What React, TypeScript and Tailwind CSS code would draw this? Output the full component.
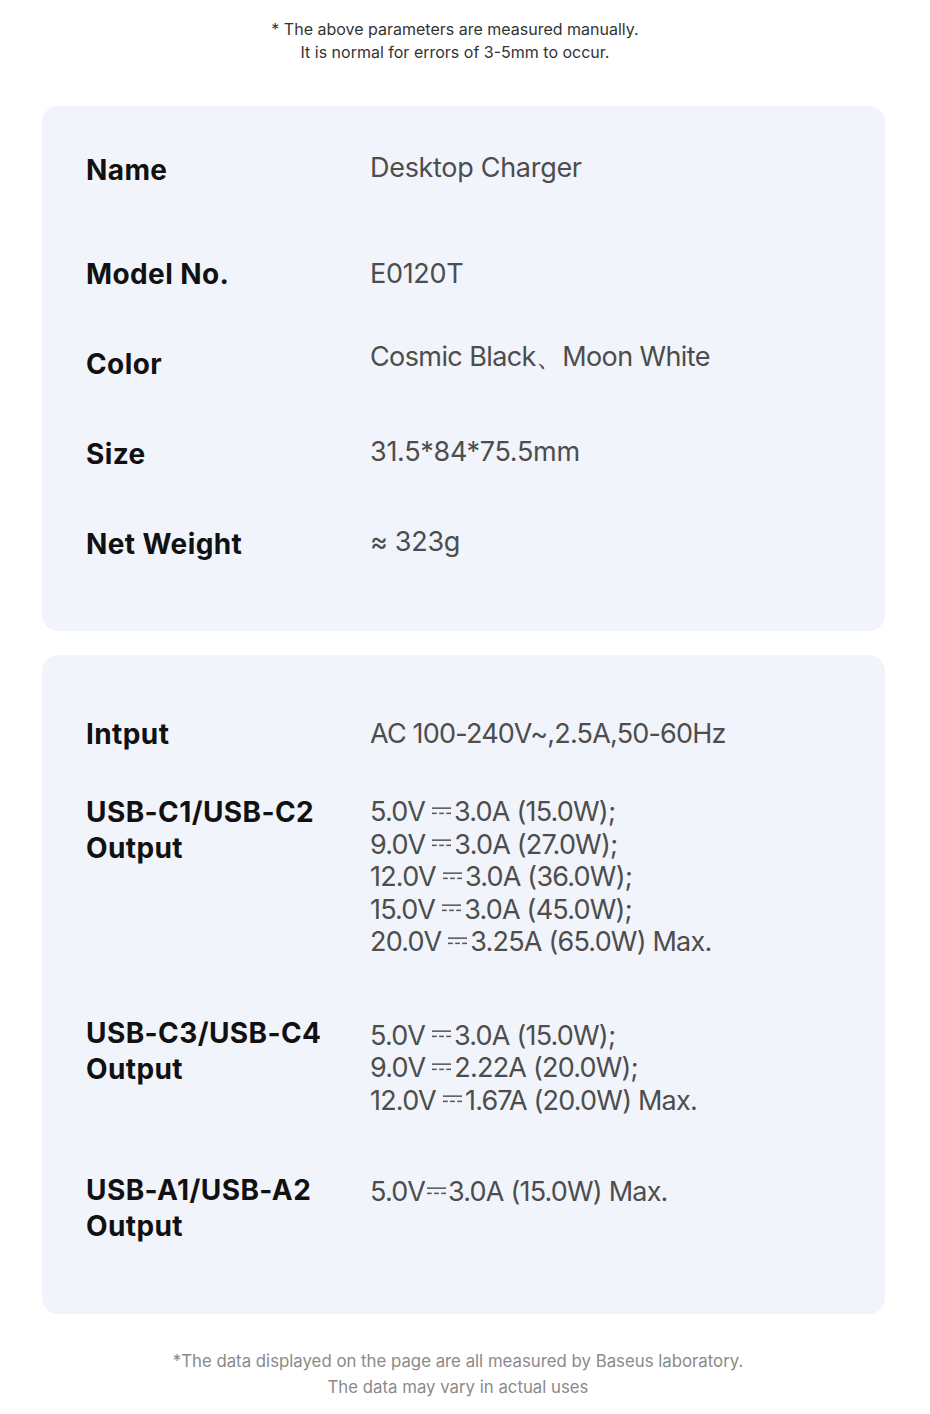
import React from 'react';

const Dc: React.FC<{ tight?: boolean }> = ({ tight }) => (
  <svg
    viewBox="0 0 20 12"
    className={`inline-block w-[19px] h-[12px] align-middle -mt-[6px] ${tight ? 'mx-[2px]' : 'ml-[7px] mr-[3px]'}`}
  >
    <line x1="0" y1="3" x2="20" y2="3" stroke="#555" strokeWidth="1.6" />
    <line x1="0" y1="8.5" x2="5" y2="8.5" stroke="#555" strokeWidth="1.6" />
    <line x1="7.5" y1="8.5" x2="12.5" y2="8.5" stroke="#555" strokeWidth="1.6" />
    <line x1="15" y1="8.5" x2="20" y2="8.5" stroke="#555" strokeWidth="1.6" />
  </svg>
);

const Label: React.FC<{ children: React.ReactNode }> = ({ children }) => (
  <div className="w-[284px] shrink-0 text-[28px] leading-[36px] font-bold text-[#111] tracking-[0.4px]">{children}</div>
);

const App: React.FC = () => {
  return (
    <div className="w-[930px] min-h-[1414px] bg-white font-['Inter','Liberation_Sans',sans-serif]">
      <div className="pt-[18px] pr-[20px] text-center text-[16px] leading-[23px] text-[#333]">
        <p>* The above parameters are measured manually.</p>
        <p>It is normal for errors of 3-5mm to occur.</p>
      </div>

      <div className="ml-[42px] mr-[45px] mt-[42px] h-[525px] rounded-[16px] bg-[#f1f4fb] pl-[44px] pt-[19px] text-[27px] text-[#4d4d4d] tracking-[-0.3px]">
        <div className="flex h-[90px] items-center">
          <Label>Name</Label>
          <div className="mb-[4px]">Desktop Charger</div>
        </div>
        <div className="mt-[14px] flex h-[90px] items-center">
          <Label>Model No.</Label>
          <div>E0120T</div>
        </div>
        <div className="flex h-[90px] items-center">
          <Label>Color</Label>
          <div className="mb-[14px] tracking-[-0.6px]">Cosmic Black、Moon White</div>
        </div>
        <div className="flex h-[90px] items-center">
          <Label>Size</Label>
          <div className="mb-[4px]">31.5*84*75.5mm</div>
        </div>
        <div className="flex h-[90px] items-center">
          <Label>Net Weight</Label>
          <div className="mb-[4px]">≈ 323g</div>
        </div>
      </div>

      <div className="ml-[42px] mr-[45px] mt-[24px] h-[659px] rounded-[16px] bg-[#f1f4fb] pl-[44px] pt-[61px] text-[27px] text-[#4d4d4d] tracking-[-0.8px]">
        <div className="flex items-start">
          <Label>Intput</Label>
          <div className="leading-[36px]">AC 100-240V~,2.5A,50-60Hz</div>
        </div>

        <div className="mt-[42px] flex items-start">
          <Label>
            USB-C1/USB-C2
            <br />
            Output
          </Label>
          <div className="mt-[2px] leading-[32.5px]">
            <div>5.0V<Dc />3.0A (15.0W);</div>
            <div>9.0V<Dc />3.0A (27.0W);</div>
            <div>12.0V<Dc />3.0A (36.0W);</div>
            <div>15.0V<Dc />3.0A (45.0W);</div>
            <div>20.0V<Dc />3.25A (65.0W) Max.</div>
          </div>
        </div>

        <div className="mt-[56px] flex items-start">
          <Label>
            USB-C3/USB-C4
            <br />
            Output
          </Label>
          <div className="mt-[5px] leading-[32.5px]">
            <div>5.0V<Dc />3.0A (15.0W);</div>
            <div>9.0V<Dc />2.22A (20.0W);</div>
            <div>12.0V<Dc />1.67A (20.0W) Max.</div>
          </div>
        </div>

        <div className="mt-[55px] flex items-start">
          <Label>
            USB-A1/USB-A2
            <br />
            Output
          </Label>
          <div className="mt-[4px] leading-[32.5px]">
            <div>5.0V<Dc tight />3.0A (15.0W) Max.</div>
          </div>
        </div>
      </div>

      <div className="pt-[34px] pb-[14px] pr-[14px] text-center text-[16.8px] leading-[26px] text-[#8a8a8a]">
        <p>*The data displayed on the page are all measured by Baseus laboratory.</p>
        <p>The data may vary in actual uses</p>
      </div>
    </div>
  );
};

export default App;
